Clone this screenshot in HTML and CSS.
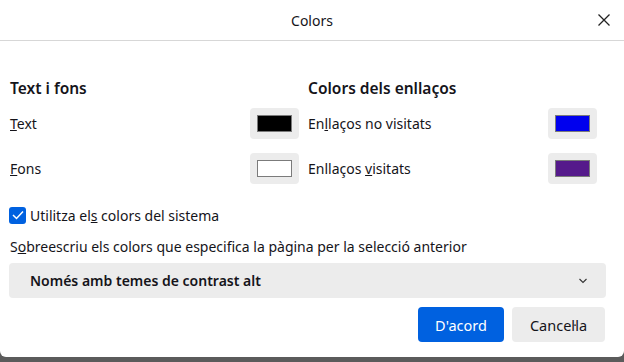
FILE: index.html
```html
<!DOCTYPE html>
<html lang="ca">
<head>
  <meta charset="UTF-8" />
  <title>Colors</title>
  <link rel="stylesheet" href="styles.css">
</head>
<body>
<div class="dialog">
  <header class="titlebar">
    <span class="title">Colors</span>
    <button class="close" aria-label="Tanca">
      <svg width="14" height="14" viewBox="0 0 14 14"><path d="M1.5 1.5 L12.5 12.5 M12.5 1.5 L1.5 12.5" stroke="#222" stroke-width="1.3" fill="none"/></svg>
    </button>
  </header>

  <div class="content">
    <div class="columns">
      <div class="col">
        <h3>Text i fons</h3>
        <div class="row">
          <span><u>T</u>ext</span>
          <button class="swatch"><span class="chip black"></span></button>
        </div>
        <div class="row">
          <span><u>F</u>ons</span>
          <button class="swatch"><span class="chip white"></span></button>
        </div>
      </div>
      <div class="col">
        <h3>Colors dels enllaços</h3>
        <div class="row">
          <span>En<u>l</u>laços no visitats</span>
          <button class="swatch"><span class="chip blue"></span></button>
        </div>
        <div class="row">
          <span>Enllaços <u>v</u>isitats</span>
          <button class="swatch"><span class="chip purple"></span></button>
        </div>
      </div>
    </div>

    <label class="check">
      <span class="box">
        <svg width="12" height="10" viewBox="0 0 12 10"><path d="M1 5 L4.5 8.5 L11 1.5" stroke="#fff" stroke-width="1.5" fill="none"/></svg>
      </span>
      <span>Utilitza el<u>s</u> colors del sistema</span>
    </label>

    <p class="note">S<u>o</u>breescriu els colors que especifica la pàgina per la selecció anterior</p>

    <div class="select">
      <span>Només amb temes de contrast alt</span>
      <svg width="10" height="6" viewBox="0 0 10 6"><path d="M1.5 1 L5 4.5 L8.5 1" stroke="#333" stroke-width="1.1" fill="none"/></svg>
    </div>

    <div class="actions">
      <button class="btn primary">D'acord</button>
      <button class="btn cancel">Cancel·la</button>
    </div>
  </div>
</div>
</body>
</html>
```

FILE: styles.css
```css
body {
  margin: 0;
  background: #5b5b5b;
  font-family: "Noto Sans", "Open Sans", sans-serif;
  font-size: 14px;
  color: #15141a;
}
.dialog {
  width: 624px;
  height: 357px;
  background: #fff;
  border-radius: 0 0 6px 6px;
  box-sizing: border-box;
}
.titlebar {
  height: 40px;
  border-bottom: 1px solid #d7d7d7;
  display: flex;
  align-items: center;
  justify-content: center;
  position: relative;
}
.title {
  font-size: 14px;
}
.close {
  position: absolute;
  right: 13px;
  top: 13px;
  border: none;
  background: none;
  padding: 0;
  width: 14px;
  height: 14px;
}
.content {
  padding: 36px 18px 0 10px;
}
.columns {
  display: flex;
  gap: 9px;
  margin-right: 9px;
}
.col {
  flex: 1;
}
h3 {
  margin: 0 0 9px;
  font-size: 15.5px;
  font-weight: 600;
  line-height: 22px;
}
.row {
  display: flex;
  justify-content: space-between;
  align-items: center;
  height: 31px;
  margin-bottom: 14px;
}
.swatch {
  width: 49px;
  height: 31px;
  background: #ececec;
  border: none;
  border-radius: 4px;
  padding: 0;
  display: flex;
  align-items: center;
  justify-content: center;
}
.chip {
  width: 33px;
  height: 15px;
  border: 1px solid #7b7b7b;
}
.black { background: #000; }
.white { background: #fff; }
.blue { background: #0000ee; }
.purple { background: #551a8b; }
.check {
  display: flex;
  align-items: center;
  gap: 4px;
  margin-top: 7px;
  margin-left: -1px;
  height: 20px;
}
.box {
  width: 17px;
  height: 17px;
  background: #0061e0;
  border-radius: 3px;
  display: flex;
  align-items: center;
  justify-content: center;
}
.note {
  margin: 12px 0 6px;
  line-height: 20px;
}
.select {
  height: 35px;
  margin-left: -1px;
  background: #ececec;
  border-radius: 4px;
  display: flex;
  align-items: center;
  justify-content: space-between;
  padding: 0 18px 0 21px;
  font-weight: 600;
}
.actions {
  display: flex;
  justify-content: flex-end;
  gap: 8px;
  margin-top: 9px;
  margin-right: 1px;
}
.btn {
  height: 35px;
  padding: 0;
  border: none;
  border-radius: 4px;
  background: #ececec;
  font-family: inherit;
  font-size: 14.5px;
  color: #15141a;
}
.primary {
  background: #0061e0;
  color: #fff;
  width: 86px;
}
.cancel {
  width: 93px;
}
```
